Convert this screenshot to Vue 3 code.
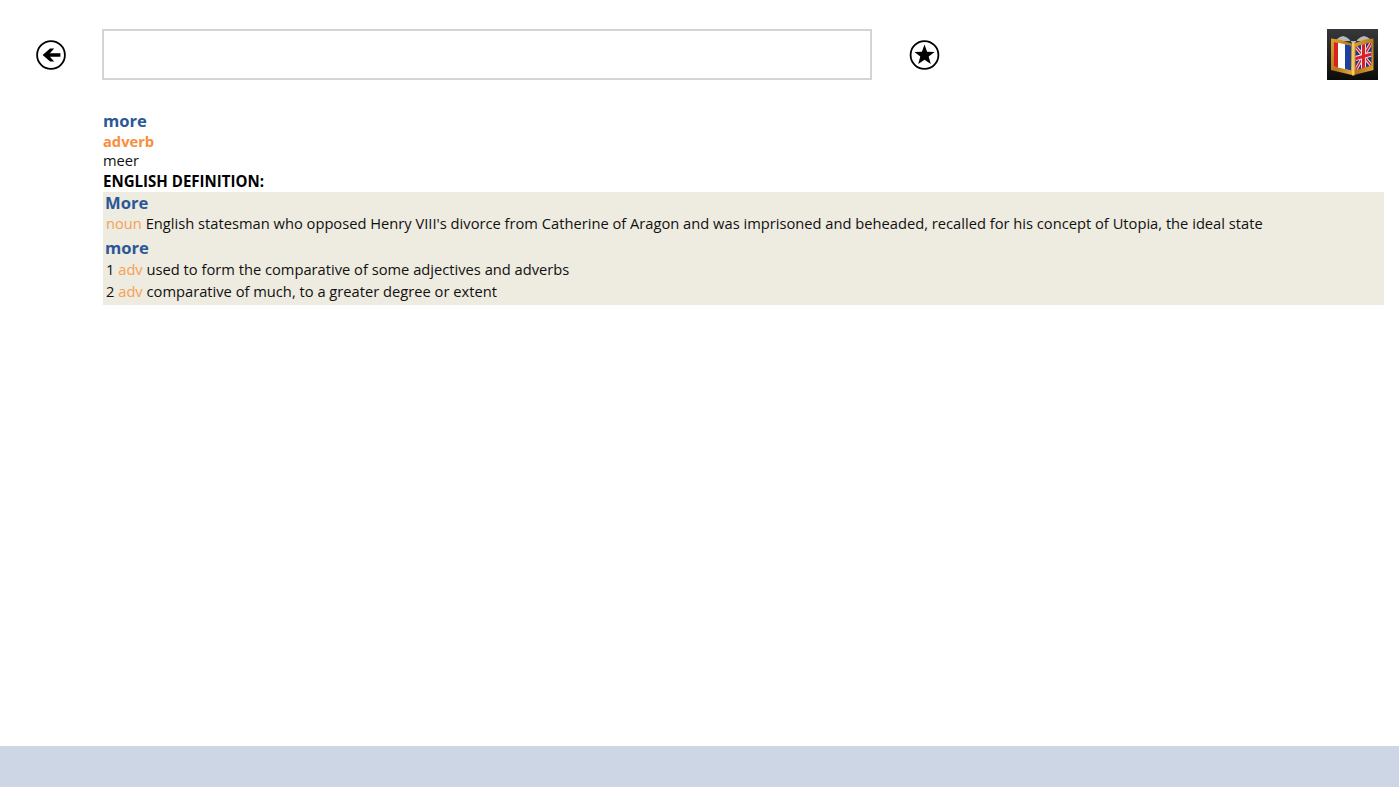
<script setup>
const defs = [
  { n: '1', t: 'used to form the comparative of some adjectives and adverbs' },
  { n: '2', t: 'comparative of much, to a greater degree or extent' },
]
</script>

<template>
  <div class="page">
    <header class="top">
      <button class="round" aria-label="Back">
        <svg width="32" height="32" viewBox="0 0 32 32">
          <circle cx="16" cy="16" r="13.9" fill="#fff" stroke="#000" stroke-width="1.8" />
          <path d="M25.4 14.2H14.9L19.2 9.6H15.1L7.6 16L15.1 22.4H19.2L14.9 17.8H25.4Z" fill="#000" />
        </svg>
      </button>
      <input class="search" type="text" />
      <button class="round star" aria-label="Favourite">
        <svg width="32" height="32" viewBox="0 0 32 32">
          <circle cx="15.5" cy="16" r="13.9" fill="#fff" stroke="#000" stroke-width="1.8" />
          <path d="M15.5 5.6L18.1 12.8L25.6 13L19.7 17.6L21.8 25L15.5 20.7L9.2 25L11.3 17.6L5.4 13L12.9 12.8Z" fill="#000" />
        </svg>
      </button>
      <svg class="logo" width="51" height="51" viewBox="0 0 51 51">
        <defs>
          <linearGradient id="bg" x1="0" y1="0" x2="0" y2="1">
            <stop offset="0" stop-color="#36383b" />
            <stop offset="1" stop-color="#0c0c0c" />
          </linearGradient>
          <linearGradient id="gold" x1="0" y1="0" x2="1" y2="1">
            <stop offset="0" stop-color="#e2a42c" />
            <stop offset="0.55" stop-color="#b5761a" />
            <stop offset="1" stop-color="#e8ac35" />
          </linearGradient>
        </defs>
        <rect width="51" height="51" fill="url(#bg)" />
        <path d="M10 10L13 8L16 7L19 8L22 10L25 14H28L31 10L34 8L37 7L40 8L43 10V12H10Z" fill="#b9b9b4" />
        <path d="M4 9.5L12 10.5L25 14.5V46L4 41Z" fill="url(#gold)" />
        <path d="M27 14.5L38 10.5L46.5 9.5V41L27 46Z" fill="url(#gold)" />
        <path d="M25 14H27.5V46.5H25Z" fill="#f2cb5e" />
        <path d="M7 13L24 16.5V41.5L7 37.5Z" fill="#fff" />
        <path d="M7 13L11 13.8V38.4L7 37.5Z" fill="#d8241f" />
        <path d="M18 15.3L24 16.5V41.5L18 40.1Z" fill="#1d3f9f" />
        <clipPath id="page"><path d="M28.5 17.5L44.5 13.3V36.6L28.5 41.2Z" /></clipPath>
        <g clip-path="url(#page)">
          <rect x="28" y="13" width="17" height="29" fill="#27357f" />
          <path d="M28.5 17.5L44.5 36.6M44.5 13.3L28.5 41.2" stroke="#f3d8dc" stroke-width="3.4" />
          <path d="M28.5 17.5L44.5 36.6M44.5 13.3L28.5 41.2" stroke="#d8202a" stroke-width="1.5" />
          <path d="M36.5 12V42M28 29.7L45 25" stroke="#f3d8dc" stroke-width="5" />
          <path d="M36.5 12V42M28 29.7L45 25" stroke="#d8202a" stroke-width="3" />
        </g>
      </svg>
    </header>

    <main class="entry">
      <div class="word">more</div>
      <div class="pos">adverb</div>
      <div class="trans">meer</div>
      <div class="label">ENGLISH DEFINITION:</div>
      <section class="defs">
        <div class="head">More</div>
        <div class="line short"><span class="tag">noun</span> English statesman who opposed Henry VIII's divorce from Catherine of Aragon and was imprisoned and beheaded, recalled for his concept of Utopia, the ideal state</div>
        <div class="head second">more</div>
        <div v-for="d in defs" :key="d.n" class="line">{{ d.n }} <span class="tag">adv</span> {{ d.t }}</div>
      </section>
    </main>

    <footer class="bar"></footer>
  </div>
</template>

<style scoped>
.page {
  height: 787px;
  width: 1399px;
  display: flex;
  flex-direction: column;
  overflow: hidden;
  background: #fff;
  color: #111;
  font-family: "Open Sans", "Noto Sans", sans-serif;
  font-size: 14.7px;
}
.top {
  display: flex;
  align-items: center;
  height: 51px;
  margin-top: 29px;
  padding-left: 35px;
  padding-right: 21px;
}
.round {
  width: 32px;
  height: 32px;
  padding: 0;
  border: 0;
  background: none;
  display: block;
}
.round svg { display: block; }
.search {
  box-sizing: border-box;
  width: 770px;
  height: 51px;
  margin-left: 35px;
  border: 2px solid #d4d4d4;
  background: #fff;
  outline: none;
}
.star { margin-left: 37px; }
.logo { margin-left: auto; display: block; }
.entry {
  flex: 1;
  margin-top: 30px;
  padding-left: 103px;
  padding-right: 15px;
}
.word { color: #2b5797; font-weight: 700; font-size: 16.6px; line-height: 21px; }
.pos { color: #f98e3c; font-weight: 700; font-size: 14.7px; line-height: 20px; }
.trans { line-height: 18px; }
.label { font-weight: 700; font-size: 15.05px; line-height: 22px; padding-top: 1px; color: #000; }
.defs {
  background: #eeebe0;
  padding-left: 2px;
  height: 113px;
  box-sizing: border-box;
}
.head { color: #2b5797; font-weight: 700; font-size: 16.6px; line-height: 21px; }
.line { padding-left: 1px; line-height: 22px; white-space: nowrap; }
.short { line-height: 20px; }
.second { margin-top: 5px; line-height: 20px; }
.tag { color: #f6a055; }
.bar { height: 41px; background: #cdd6e5; }
</style>
